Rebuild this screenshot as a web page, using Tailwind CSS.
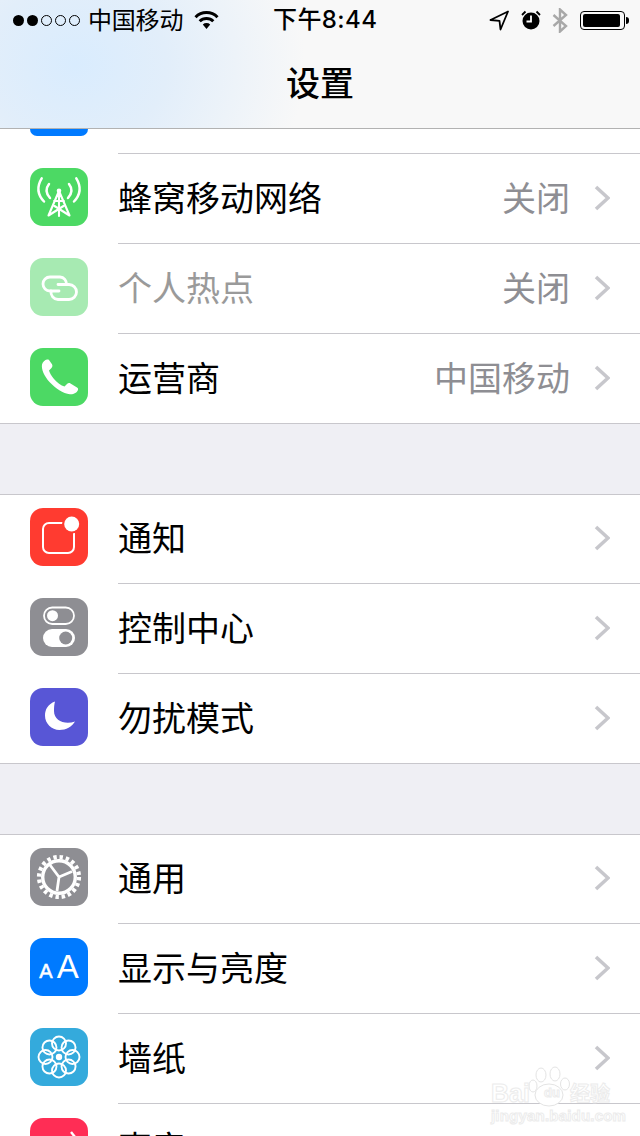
<!DOCTYPE html>
<html lang="zh-CN">
<head>
<meta charset="utf-8">
<script src="https://cdn.jsdelivr.net/npm/@tailwindcss/browser@4"></script>
</head>
<body class="m-0">
<div class="relative w-[640px] h-[1136px] overflow-hidden bg-white text-black font-['Noto_Sans_CJK_SC','Noto_Sans',sans-serif]">

  <!-- header -->
  <header class="h-[129px] border-b border-[#b2b2b2] bg-[radial-gradient(ellipse_230px_200px_at_75px_65px,#d9ecfe_0%,#e2eefa_40%,#f8f8f8_100%)]">
    <div class="relative flex items-center h-[40px] pl-[13px] pr-[11px]">
      <div class="flex items-center gap-[3px]">
        <span class="w-[11px] h-[11px] rounded-full bg-black"></span>
        <span class="w-[11px] h-[11px] rounded-full bg-black"></span>
        <span class="w-[11px] h-[11px] rounded-full border border-black"></span>
        <span class="w-[11px] h-[11px] rounded-full border border-black"></span>
        <span class="w-[11px] h-[11px] rounded-full border border-black"></span>
      </div>
      <span class="ml-[8px] pb-[2px] text-[24px] leading-[40px] tracking-[-0.2px]">中国移动</span>
      <svg class="ml-[11px]" width="25" height="20" viewBox="0 0 25 20"><path d="M1.5 7.2 A15.5 15.5 0 0 1 23.5 7.2" fill="none" stroke="#000" stroke-width="3"/><path d="M5.7 11.2 A9.6 9.6 0 0 1 19.3 11.2" fill="none" stroke="#000" stroke-width="3"/><path d="M8.8 14.4 A5.4 5.4 0 0 1 16.2 14.4 L12.5 19 Z" fill="#000"/></svg>
      <span class="absolute left-[273px] top-0 pb-[2px] text-[24px] leading-[40px] font-medium font-['Inter','Noto_Sans_CJK_SC',sans-serif] tracking-[0.4px]">下午8:44</span>
      <div class="ml-auto flex items-center">
        <svg width="20" height="21" viewBox="0 0 20 21"><path d="M19 1.5 L1.5 10 L10.5 10.8 L11.5 19.5 Z" fill="none" stroke="#000" stroke-width="1.8" stroke-linejoin="round"/></svg>
        <svg class="ml-[12px]" width="20" height="20" viewBox="0 0 20 20"><circle cx="10" cy="11" r="8.5" fill="#000"/><path d="M10 5.5 V11.5 H5.5" fill="none" stroke="#fff" stroke-width="1.8"/><path d="M1 5 L4.5 1.5 M19 5 L15.5 1.5" stroke="#000" stroke-width="1.8"/></svg>
        <svg class="ml-[11px]" width="16" height="25" viewBox="0 0 16 25"><path d="M1.5 7 L14 18 L8 23.5 V1.5 L14 7 L1.5 18" fill="none" stroke="#a8a8a8" stroke-width="2.4"/></svg>
        <div class="ml-[12px] flex items-center">
          <div class="w-[45px] h-[19px] rounded-[4px] border border-black p-[2px]"><div class="h-full w-[37px] rounded-[2px] bg-black"></div></div>
          <div class="w-[3px] h-[7px] rounded-r-[3px] bg-black ml-[1px]"></div>
        </div>
      </div>
    </div>
    <div class="h-[88px] flex items-center justify-center pb-[4px]">
      <h1 class="text-[34px] leading-[44px] font-medium">设置</h1>
    </div>
  </header>

  <!-- clipped row above -->
  <div class="flex h-[25px] pl-[30px]">
    <div class="w-[58px] h-[7px] rounded-b-[13px] bg-[#007aff]"></div>
    <div class="ml-[30px] flex-1 border-b border-[#c8c7cc]"></div>
  </div>

  <!-- cellular group -->
  <section class="border-b border-[#c8c7cc]">
    <div class="flex h-[90px] pl-[30px]">
      <div class="mt-[14px] w-[58px] h-[58px] rounded-[13px] bg-[#4cd964]">
        <svg width="58" height="58" viewBox="0 0 58 58" fill="none" stroke="#fff" stroke-linecap="round"><path d="M11.7 10.3 C7 18 7 26 14 33.5 M46.3 10.3 C51 18 51 26 44 33.5 M19 16 C15.5 20.5 15.5 25 20 30 M39 16 C42.5 20.5 42.5 25 38 30" stroke-width="2.5"/><path d="M29 23 V48 M29 23 L18.5 47.5 M29 23 L39.5 47.5 M18.5 47.5 L33.5 38 M39.5 47.5 L24.5 38 M24 33 H34" stroke-width="2.1"/><circle cx="29" cy="22.7" r="2.3" fill="#fff" stroke="none"/></svg>
      </div>
      <div class="ml-[30px] flex-1 flex items-center justify-between border-b border-[#c8c7cc] pr-[30px] pb-[4px]">
        <span class="text-[34px] leading-[44px]">蜂窝移动网络</span>
        <span class="flex items-center gap-[24px] text-[34px] leading-[44px] text-[#8e8e93]">关闭<svg class="mt-[2px]" width="16" height="26" viewBox="0 0 16 26"><path d="M2 2 L14 13 L2 24" fill="none" stroke="#c7c7cc" stroke-width="3.6"/></svg></span>
      </div>
    </div>
    <div class="flex h-[90px] pl-[30px]">
      <div class="mt-[14px] w-[58px] h-[58px] rounded-[13px] bg-[#a7eab2]">
        <svg width="58" height="58" viewBox="0 0 58 58" fill="none" stroke="#fff" stroke-width="2.8" stroke-linecap="round"><path d="M29 33 H20 A7 7 0 0 1 20 19 H30 A7 7 0 0 1 36.5 26.5"/><path d="M28 26.5 H39 A7.5 7.5 0 0 1 39 41.5 H28 A7.5 7.5 0 0 1 21 33"/></svg>
      </div>
      <div class="ml-[30px] flex-1 flex items-center justify-between border-b border-[#c8c7cc] pr-[30px] pb-[4px]">
        <span class="text-[34px] leading-[44px] text-[#9a9a9a]">个人热点</span>
        <span class="flex items-center gap-[24px] text-[34px] leading-[44px] text-[#8e8e93]">关闭<svg class="mt-[2px]" width="16" height="26" viewBox="0 0 16 26"><path d="M2 2 L14 13 L2 24" fill="none" stroke="#c7c7cc" stroke-width="3.6"/></svg></span>
      </div>
    </div>
    <div class="flex h-[89px] pl-[30px]">
      <div class="mt-[14px] w-[58px] h-[58px] rounded-[13px] bg-[#4cd964]">
        <svg width="58" height="58" viewBox="0 0 58 58"><path d="M17 11.5 C15 11.8 12.5 14 12 16.5 C11.2 21 14 28 19.5 34 C25.5 40.5 33 45.5 40 46.3 C43.5 46.7 47 44.5 48 42 C48.3 41 48 40 47 39.5 L40.5 35.5 C39.3 34.8 38 35 37 36 L34.5 38.5 C31 37.5 27 34.5 24 31 C21.5 28 19.5 24.5 19 22.5 L21.5 20 C22.5 19 22.7 17.5 22 16.3 L19 12 C18.5 11.5 17.8 11.4 17 11.5 Z" fill="#fff"/></svg>
      </div>
      <div class="ml-[30px] flex-1 flex items-center justify-between pr-[30px] pb-[4px]">
        <span class="text-[34px] leading-[44px]">运营商</span>
        <span class="flex items-center gap-[24px] text-[34px] leading-[44px] text-[#8e8e93]">中国移动<svg class="mt-[2px]" width="16" height="26" viewBox="0 0 16 26"><path d="M2 2 L14 13 L2 24" fill="none" stroke="#c7c7cc" stroke-width="3.6"/></svg></span>
      </div>
    </div>
  </section>

  <div class="h-[70px] bg-[#efeff4]"></div>

  <!-- notifications group -->
  <section class="border-y border-[#c8c7cc]">
    <div class="flex h-[89px] pl-[30px]">
      <div class="mt-[13px] w-[58px] h-[58px] rounded-[13px] bg-[#ff3b30]">
        <svg width="58" height="58" viewBox="0 0 58 58"><rect x="13" y="15" width="31" height="30" rx="6" fill="none" stroke="#fff" stroke-width="2"/><circle cx="41.5" cy="16" r="9.5" fill="#ff3b30"/><circle cx="41.7" cy="16" r="7.5" fill="#fff"/></svg>
      </div>
      <div class="ml-[30px] flex-1 flex items-center justify-between border-b border-[#c8c7cc] pr-[30px] pb-[4px]">
        <span class="text-[34px] leading-[44px]">通知</span>
        <svg class="mt-[2px]" width="16" height="26" viewBox="0 0 16 26"><path d="M2 2 L14 13 L2 24" fill="none" stroke="#c7c7cc" stroke-width="3.6"/></svg>
      </div>
    </div>
    <div class="flex h-[90px] pl-[30px]">
      <div class="mt-[14px] w-[58px] h-[58px] rounded-[13px] bg-[#8e8e93]">
        <svg width="58" height="58" viewBox="0 0 58 58"><rect x="14" y="9.5" width="30" height="16.5" rx="8.25" fill="none" stroke="#fff" stroke-width="1.8"/><circle cx="22.5" cy="17.7" r="5.5" fill="#fff"/><rect x="13" y="31" width="32" height="18" rx="9" fill="#fff"/><circle cx="35.7" cy="40" r="6.5" fill="#8e8e93"/></svg>
      </div>
      <div class="ml-[30px] flex-1 flex items-center justify-between border-b border-[#c8c7cc] pr-[30px] pb-[4px]">
        <span class="text-[34px] leading-[44px]">控制中心</span>
        <svg class="mt-[2px]" width="16" height="26" viewBox="0 0 16 26"><path d="M2 2 L14 13 L2 24" fill="none" stroke="#c7c7cc" stroke-width="3.6"/></svg>
      </div>
    </div>
    <div class="flex h-[89px] pl-[30px]">
      <div class="mt-[14px] w-[58px] h-[58px] rounded-[13px] bg-[#5856d6]">
        <svg width="58" height="58" viewBox="0 0 58 58"><path d="M25 13.5 C18 16 15 21.5 15 27.5 C15 35.5 21.5 42 29.5 42 C36 42 42 38.5 45 33.5 C35 37 24 33 24 23 C24 19.5 24.2 16.5 25 13.5 Z" fill="#fff"/></svg>
      </div>
      <div class="ml-[30px] flex-1 flex items-center justify-between pr-[30px] pb-[4px]">
        <span class="text-[34px] leading-[44px]">勿扰模式</span>
        <svg class="mt-[2px]" width="16" height="26" viewBox="0 0 16 26"><path d="M2 2 L14 13 L2 24" fill="none" stroke="#c7c7cc" stroke-width="3.6"/></svg>
      </div>
    </div>
  </section>

  <div class="h-[70px] bg-[#efeff4]"></div>

  <!-- general group -->
  <section class="border-t border-[#c8c7cc]">
    <div class="flex h-[89px] pl-[30px]">
      <div class="mt-[13px] w-[58px] h-[58px] rounded-[13px] bg-[#8e8e93]">
        <svg width="58" height="58" viewBox="0 0 58 58" fill="none" stroke="#fff"><circle cx="29" cy="29" r="20" stroke-width="4.2" stroke-dasharray="3.4 2.88"/><circle cx="29" cy="29" r="16.3" stroke-width="3.4"/><path d="M29 29 L20 17 M29 29 L42 23.5 M29 29 L27 43" stroke-width="2.8"/></svg>
      </div>
      <div class="ml-[30px] flex-1 flex items-center justify-between border-b border-[#c8c7cc] pr-[30px] pb-[4px]">
        <span class="text-[34px] leading-[44px]">通用</span>
        <svg class="mt-[2px]" width="16" height="26" viewBox="0 0 16 26"><path d="M2 2 L14 13 L2 24" fill="none" stroke="#c7c7cc" stroke-width="3.6"/></svg>
      </div>
    </div>
    <div class="flex h-[90px] pl-[30px]">
      <div class="mt-[14px] w-[58px] h-[58px] rounded-[13px] bg-[#007aff] flex items-baseline justify-center gap-[4px] text-white font-['Liberation_Sans',sans-serif] leading-[58px]">
        <span class="text-[20px] [-webkit-text-stroke:0.5px_#fff]">A</span><span class="text-[33px] font-light">A</span>
      </div>
      <div class="ml-[30px] flex-1 flex items-center justify-between border-b border-[#c8c7cc] pr-[30px] pb-[4px]">
        <span class="text-[34px] leading-[44px]">显示与亮度</span>
        <svg class="mt-[2px]" width="16" height="26" viewBox="0 0 16 26"><path d="M2 2 L14 13 L2 24" fill="none" stroke="#c7c7cc" stroke-width="3.6"/></svg>
      </div>
    </div>
    <div class="flex h-[90px] pl-[30px]">
      <div class="mt-[14px] w-[58px] h-[58px] rounded-[13px] bg-[#34aadc]">
        <svg width="58" height="58" viewBox="0 0 58 58" fill="none" stroke="#fff" stroke-width="1.9"><g transform="translate(29 29)"><circle cx="0" cy="-13.5" r="7"/><circle cx="0" cy="-13.5" r="7" transform="rotate(45)"/><circle cx="0" cy="-13.5" r="7" transform="rotate(90)"/><circle cx="0" cy="-13.5" r="7" transform="rotate(135)"/><circle cx="0" cy="-13.5" r="7" transform="rotate(180)"/><circle cx="0" cy="-13.5" r="7" transform="rotate(225)"/><circle cx="0" cy="-13.5" r="7" transform="rotate(270)"/><circle cx="0" cy="-13.5" r="7" transform="rotate(315)"/><circle r="3.2" fill="#fff" stroke="none"/></g></svg>
      </div>
      <div class="ml-[30px] flex-1 flex items-center justify-between border-b border-[#c8c7cc] pr-[30px] pb-[4px]">
        <span class="text-[34px] leading-[44px]">墙纸</span>
        <svg class="mt-[2px]" width="16" height="26" viewBox="0 0 16 26"><path d="M2 2 L14 13 L2 24" fill="none" stroke="#c7c7cc" stroke-width="3.6"/></svg>
      </div>
    </div>
    <div class="flex h-[90px] pl-[30px]">
      <div class="mt-[14px] w-[58px] h-[58px] rounded-[13px] bg-[#ff2d55]">
        <svg width="58" height="58" viewBox="0 0 58 58"><path d="M41 14 L45 19" fill="none" stroke="#fff" stroke-width="2.4"/></svg>
      </div>
      <div class="ml-[30px] flex-1 flex items-center justify-between pr-[30px] pb-[4px]">
        <span class="text-[34px] leading-[44px]">声音</span>
      </div>
    </div>
  </section>

  <!-- watermark -->
  <div class="absolute left-[491px] top-[1066px] w-[120px] text-white [-webkit-text-stroke:1px_#ececec] font-['Liberation_Sans',sans-serif]">
    <svg class="absolute left-[36px] top-0" width="44" height="44" viewBox="0 0 44 44" fill="#fff" stroke="#e4e4e4" stroke-width="1"><ellipse cx="14" cy="9" rx="5" ry="7"/><ellipse cx="28" cy="8" rx="5" ry="7"/><ellipse cx="38" cy="18" rx="4.5" ry="6"/><ellipse cx="6" cy="20" rx="4" ry="6"/><ellipse cx="22" cy="29" rx="14" ry="11"/></svg>
    <div class="relative flex items-center h-[40px] pt-[14px] text-[25px] leading-[26px] font-bold"><span>Bai</span><span class="ml-[2px] text-[13px] w-[40px] text-center">du</span><span class="ml-[-2px] text-[20px] font-['Noto_Sans_CJK_SC',sans-serif]">经验</span></div>
    <div class="relative mt-[1px] text-[15px] leading-[18px] font-bold tracking-[0.2px]">jingyan.baidu.com</div>
  </div>
</div>
</body>
</html>
